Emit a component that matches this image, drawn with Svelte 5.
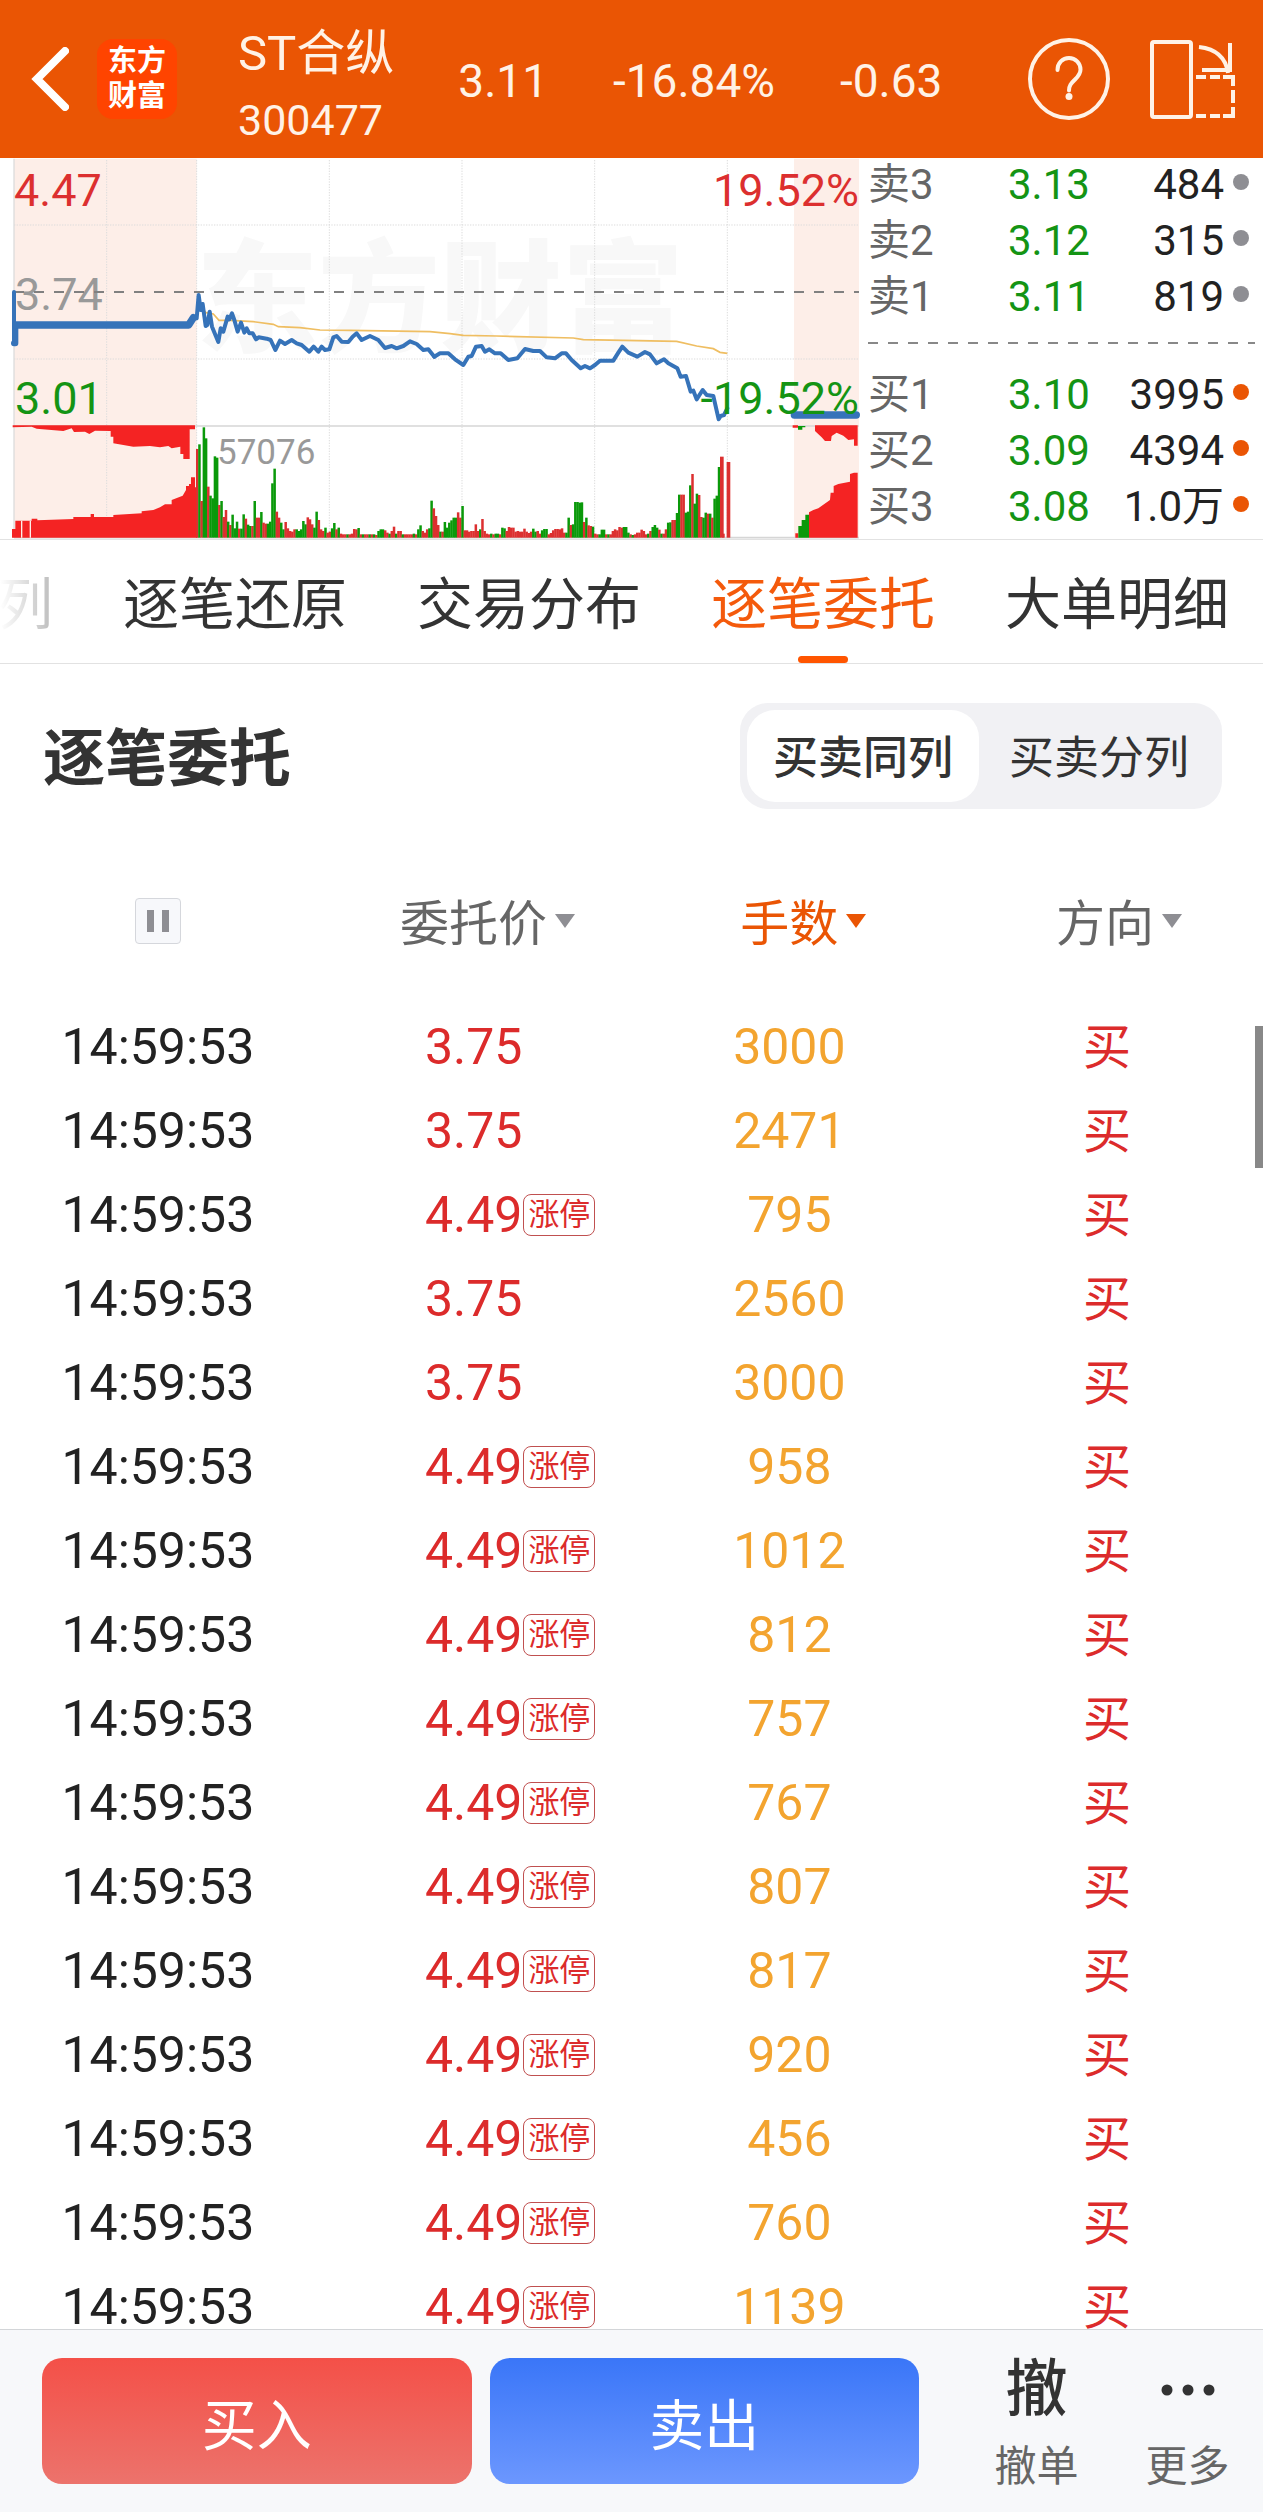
<script>
  const stock = { name: 'ST合纵', code: '300477', price: '3.11', percent: '-16.84%', change: '-0.63' };

  const sells = [
    { label: '卖3', price: '3.13', volume: '484' },
    { label: '卖2', price: '3.12', volume: '315' },
    { label: '卖1', price: '3.11', volume: '819' },
  ];
  const buys = [
    { label: '买1', price: '3.10', volume: '3995' },
    { label: '买2', price: '3.09', volume: '4394' },
    { label: '买3', price: '3.08', volume: '1.0万' },
  ];

  const tabs = ['列', '逐笔还原', '交易分布', '逐笔委托', '大单明细'];
  let activeTab = '逐笔委托';

  const modes = ['买卖同列', '买卖分列'];
  let activeMode = '买卖同列';

  const columns = ['委托价', '手数', '方向'];
  let sortBy = '手数';
  let paused = false;

  const LIMIT_UP = '4.49';
  const orders = [
    ['3.75', 3000],
    ['3.75', 2471],
    ['4.49', 795],
    ['3.75', 2560],
    ['3.75', 3000],
    ['4.49', 958],
    ['4.49', 1012],
    ['4.49', 812],
    ['4.49', 757],
    ['4.49', 767],
    ['4.49', 807],
    ['4.49', 817],
    ['4.49', 920],
    ['4.49', 456],
    ['4.49', 760],
    ['4.49', 1139],
  ].map(([price, hands]) => ({ time: '14:59:53', price, hands, side: '买' }));

  // one entry per minute: r = up, g = down, number = bar height
  const volumes = `
    r266 g280 r110 g331 g298 r153 g126 g118 g244 g240 r98 g110 r62 r83 g48 r38 g69 g28 g48 r27
    g27 g70 r57 g39 g35 r35 g110 r60 r60 g77 r45 r42 g42 g48 g163 g207 r78 r60 g45 g25
    r47 r28 r20 r18 r25 g25 g20 g25 g50 g40 r61 r55 r40 g30 g78 r53 r25 r20 g30 r15
    r18 g28 g44 r25 g30 r12 r10 r10 g10 r10 r12 r26 r25 g29 r10 g10 r10 r10 g10 r10
    g10 r8 g20 g25 g25 r22 r15 g12 r20 r33 g12 r20 r20 g10 r10 r10 r10 r10 g12 r10
    g25 g37 r20 r15 r25 g28 g111 r88 r65 r38 g18 r18 g47 g30 g45 g52 g60 g60 r76 r60
    g95 r22 r22 r18 r20 r20 r40 r20 g25 r56 r20 r12 r10 g12 r10 g12 g12 r10 g30 g28
    r20 r32 r30 r30 r18 r20 r18 r18 r27 r18 r14 r18 g27 g18 r20 r12 g22 g26 g26 r10
    r14 r22 r26 r26 r25 r28 r15 g15 g60 r38 g40 g107 g107 g105 g106 r47 g60 r37 r35 g33
    r12 r10 g10 g24 g24 r10 g10 r10 r20 r25 r22 r32 r30 g32 g32 g15 r10 g8 r10 r15
    r15 r24 r20 r10 g12 r20 g32 g38 g30 r24 g12 r12 r25 g45 g46 r53 r53 g74 g129 r129
    r129 g75 g78 g157 r191 g102 g132 r128 r62 g60 g75 r72 g72 r60 g117 g126 g212 r243 r12 r0 r227`
    .trim()
    .split(/\s+/)
    .map((bar, i) => ({ up: bar[0] === 'r', height: Number(bar.slice(1)), x: 588 + i * 6.633 }));
</script>

<div class="page" lang="zh-CN">
  <header>
    <button class="icon-btn" aria-label="返回">
      <svg width="38" height="64" viewBox="0 0 38 64"><path d="M34 4 6 32l28 28" fill="none" stroke="#fff" stroke-width="8" stroke-linecap="round" /></svg>
    </button>
    <div class="logo"><span>东方</span><span>财富</span></div>
    <div class="stock">
      <h1>{stock.name}</h1>
      <p>{stock.code}</p>
    </div>
    <div class="quote">
      <span>{stock.price}</span>
      <span>{stock.percent}</span>
      <span>{stock.change}</span>
    </div>
    <div class="tools">
      <button class="icon-btn" aria-label="帮助">
        <svg width="82" height="82" viewBox="0 0 82 82" fill="none" stroke="#fff2e6" stroke-width="4">
          <circle cx="41" cy="41" r="39" />
          <path d="M29.500 32c0-7 5-12 11.500-12s11.500 5 11.500 11.500c0 5-3 7.500-6 10.500-3.500 3.500-5.500 5.500-5.500 10.500" stroke-linecap="round" />
          <circle cx="41" cy="58.500" r="3.500" fill="#fff2e6" stroke="none" />
        </svg>
      </button>
      <button class="icon-btn" aria-label="横屏">
        <svg width="86" height="80" viewBox="0 0 86 80" fill="none" stroke="#fff2e6" stroke-width="4">
          <rect x="3" y="3" width="39" height="75" rx="2" />
          <path d="M50 8c18 2 27 12 29 26M81 4v27H53" />
          <path d="M47 38h10M61 38h10M74 38h10v9M84 51v13M84 68v9h-10M71 77H61M57 77H47" />
        </svg>
      </button>
    </div>
  </header>

  <section class="market">
    <svg class="chart" viewBox="0 0 860 381" role="img" aria-label="分时图">
      <text class="watermark" x="196" y="184">东方财富</text>
      <g transform="translate(0 -8) scale(0.33333)">
        <path d="M42 26H590V1163H42zM2382 26H2577V1163H2382z" fill="#fdeee8" />
        <path d="M42 225H2577M42 627H2577M320 30V1163M590 30V1163M988 30V1163M1386 30V1163M1784 30V1163M2182 30V1163" class="grid" />
        <path d="M42 26V1163" stroke="#ddd" stroke-width="4" />
        <path d="M42 828H2577M42 1163H2577" stroke="#d6d6d6" stroke-width="5" />
      </g>
      <text class="label mid" x="15" y="152">3.74</text>
      <text class="label down" x="15" y="256">3.01</text>
      <g transform="translate(0 -8) scale(0.33333)">
        <path d="M42 426H2577" stroke="#808080" stroke-width="6" stroke-dasharray="30 30" />

        <path
          fill="#f42323"
          d="M36 1163V1137H46V1112H95V1106H112V1111L220 1107V1101H272V1092H282V1101H340V1095L425 1090V1084L460 1080 480 1072 495 1063H515V1050L548 1037 558 1020V1008H567V1002H573V982H585V1012H592V1163z
             M38 826H585V838H569V927H550V912H541V890L515 895 505 888 480 892 450 888 400 890 370 885 340 880V860H332V843L285 842 268 852 255 845 222 846 215 835 190 843 110 836 95 830 38 832z"
        />
        <path d="M65 1112V1163M91 1112V1163" stroke="#fdeee8" stroke-width="4" />
        {#each volumes as bar}
          <rect x={bar.x} y={1163 - bar.height} width={bar.height > 220 && bar.x > 2150 ? 11 : 7.5} height={bar.height} fill={bar.up ? '#dc3030' : '#0a990a'} />
        {/each}

        <g transform="translate(1290 0)">
          <path
            fill="#f42323"
            d="M1155 826H1283V887H1272V868L1255 870 1240 857 1220 848 1205 858 1203 873H1185L1175 862 1155 843zM1088 826H1104V833H1088z
               M1137 1163V1087L1150 1080 1165 1075 1200 1050 1202 1028H1211V1008L1225 1002 1260 995V972L1272 968H1283V1163zM1096 1163V1150H1105V1163z"
          />
          <path fill="#0a990a" d="M1104 828H1126V832H1117V839H1104zM1105 1163V1128H1115V1110H1126V1094H1137V1163z" />
        </g>

        <polyline
          class="average"
          points="600,470 618,488 640,492 657,511 690,511 760,515 820,523 835,530 900,533 960,540 1050,541 1290,545 1350,551 1390,556 1490,558 1720,564 1750,569 2030,574 2090,588 2140,596 2160,607 2182,610"
        />
        <path d="M42 426V580" class="price" stroke-width="12" />
        <path d="M42 580H46V525" class="price" stroke-width="18" />
        <path d="M48 525H566L580 503" class="price" stroke-width="22" />
        <polyline
          class="price"
          stroke-width="12"
          points="580,503 590,505 596,435 602,480 608,462 617,528 622,525 629,485 636,530 655,576 662,535 670,545 683,500 688,508 696,490 703,510 713,545 723,518 733,548 740,535 748,550 758,550 768,568 776,562 800,566 812,570 826,600 840,572 855,582 875,570 890,580 905,585 928,605 941,590 955,605 965,590 975,600 988,598 1000,562 1010,558 1025,575 1045,576 1058,560 1070,550 1085,570 1110,558 1135,570 1155,594 1175,588 1190,595 1210,588 1230,574 1250,582 1270,600 1285,598 1303,620"
        />
        <g transform="translate(1290 0)">
          <polyline
            class="price"
            stroke-width="12"
            points="13,620 30,610 55,610 75,628 100,645 115,620 125,618 138,590 155,588 165,605 178,598 195,610 212,610 235,630 262,625 285,597 310,603 330,603 350,622 375,625 395,610 408,610 425,630 452,655 465,648 480,655 495,645 510,632 550,632 565,608 577,590 595,608 622,620 645,606 660,613 680,640 702,628 715,640 742,655 752,680 768,678 782,725 790,722 800,748 818,720 830,735 850,738 866,808 872,798 882,795 892,775"
          />
          <path d="M1093 795H1279" class="price" stroke-width="22" />
        </g>
      </g>
      <text class="label up" x="14" y="48">4.47</text>
      <text class="label up" x="859" y="48" text-anchor="end">19.52%</text>
      <text class="label down" x="859" y="256" text-anchor="end">-19.52%</text>
      <text class="volume" x="217" y="306">57076</text>
    </svg>

    <div class="book">
      <table aria-label="卖盘">
        <tbody>
          {#each sells as row}
            <tr>
              <th scope="row">{row.label}</th>
              <td class="at">{row.price}</td>
              <td class="lots">{row.volume}<i></i></td>
            </tr>
          {/each}
        </tbody>
      </table>
      <div class="spread"></div>
      <table class="bids" aria-label="买盘">
        <tbody>
          {#each buys as row}
            <tr>
              <th scope="row">{row.label}</th>
              <td class="at">{row.price}</td>
              <td class="lots">{row.volume}<i></i></td>
            </tr>
          {/each}
        </tbody>
      </table>
    </div>
  </section>

  <nav class="tabs">
    {#each tabs as tab}
      <button class:active={tab === activeTab} on:click={() => (activeTab = tab)}>{tab}</button>
    {/each}
  </nav>

  <div class="title-bar">
    <h2>逐笔委托</h2>
    <div class="switch">
      {#each modes as mode}
        <button class:active={mode === activeMode} on:click={() => (activeMode = mode)}>{mode}</button>
      {/each}
    </div>
  </div>

  <main>
    <table class="orders">
      <thead>
        <tr>
          <th scope="col">
            <button class="pause" aria-label="暂停" aria-pressed={paused} on:click={() => (paused = !paused)}>
              <svg width="22" height="22" viewBox="0 0 22 22" fill="#8e8e93"><path d="M0 0h7v22H0zM15 0h7v22h-7z" /></svg>
            </button>
          </th>
          {#each columns as column}
            <th scope="col">
              <button class="sort" class:active={column === sortBy} on:click={() => (sortBy = column)}>{column}</button>
            </th>
          {/each}
        </tr>
      </thead>
      <tbody>
        {#each orders as order}
          <tr>
            <td>{order.time}</td>
            <td class="red">
              <span class="bid">{order.price}{#if order.price === LIMIT_UP}<em>涨停</em>{/if}</span>
            </td>
            <td class="hands">{order.hands}</td>
            <td class="red side">{order.side}</td>
          </tr>
        {/each}
      </tbody>
    </table>
    <div class="thumb"></div>
  </main>

  <footer>
    <button class="trade buy">买入</button>
    <button class="trade sell">卖出</button>
    <button class="action"><b>撤</b><span>撤单</span></button>
    <button class="action">
      <svg width="56" height="64" viewBox="0 0 56 64" fill="#333"><circle cx="7" cy="32" r="5.500" /><circle cx="28" cy="32" r="5.500" /><circle cx="49" cy="32" r="5.500" /></svg>
      <span>更多</span>
    </button>
  </footer>
</div>

<style>
  .page {
    display: flex;
    flex-direction: column;
    height: 100vh;
    overflow: hidden;
    background: #fff;
    color: #222;
    font-family: Roboto, 'Noto Sans CJK SC', sans-serif;
  }

  button {
    padding: 0;
    border: 0;
    background: none;
    color: inherit;
    font: inherit;
    cursor: pointer;
  }
  h1,
  h2,
  p {
    margin: 0;
    font-weight: 400;
  }
  svg {
    display: block;
  }

  header {
    display: flex;
    align-items: center;
    flex: none;
    height: 158px;
    padding: 0 28px 0 31px;
    box-sizing: border-box;
    background: #ea5504;
    color: #fff2e6;
  }
  .logo {
    display: flex;
    flex-direction: column;
    align-items: center;
    justify-content: center;
    width: 80px;
    height: 80px;
    margin: 0 61px 0 28px;
    border-radius: 16px;
    background: #ff4400;
    color: #fff;
    font-size: 29px;
    font-weight: 700;
    line-height: 35px;
  }
  .stock {
    padding-top: 12px;
  }
  .stock h1 {
    font-size: 49px;
    line-height: 58px;
  }
  .stock p {
    margin-top: 12px;
    font-size: 43px;
    line-height: 50px;
  }
  .quote {
    display: flex;
    gap: 65px;
    padding: 4px 0 0 64px;
    font-size: 46px;
  }
  .tools {
    display: flex;
    align-items: center;
    gap: 39px;
    margin-left: auto;
  }

  .market {
    display: grid;
    grid-template-columns: 860fr 403fr;
    flex: none;
    border-bottom: 1px solid #e2e2e2;
  }
  .chart {
    width: 100%;
  }
  .watermark {
    font-size: 122px;
    font-weight: 900;
    fill: #f8f8f8;
  }
  .grid {
    fill: none;
    stroke: #dcdcdc;
    stroke-width: 3;
    stroke-dasharray: 4 4;
  }
  .average {
    fill: none;
    stroke: #efbe62;
    stroke-width: 5;
  }
  .price {
    fill: none;
    stroke: #3673b9;
    stroke-linejoin: round;
    stroke-linecap: round;
  }
  .label {
    font-size: 45px;
  }
  .volume {
    font-size: 35px;
    fill: #999;
  }
  .up {
    fill: #dc2f2f;
  }
  .mid {
    fill: #999;
  }
  .down {
    fill: #149414;
  }

  .book {
    padding: 0 14px 0 8px;
    font-size: 42px;
    line-height: 54px;
  }
  .book table {
    width: 100%;
    border-collapse: collapse;
    table-layout: fixed;
  }
  .book tr {
    height: 56px;
  }
  .book th,
  .book td {
    padding: 0;
    vertical-align: top;
    white-space: nowrap;
  }
  .book th {
    width: 31%;
    color: #666;
    font-weight: 400;
    text-align: left;
  }
  .book .at {
    width: 33%;
    color: #149414;
    text-align: center;
  }
  .book .lots {
    text-align: right;
  }
  .book i {
    display: inline-block;
    width: 16px;
    height: 16px;
    margin-left: 9px;
    border-radius: 50%;
    background: #8e8e93;
    vertical-align: 9px;
  }
  .bids i {
    background: #ea5504;
  }
  .spread {
    height: 2px;
    margin: 16px -6px 24px 0;
    background: repeating-linear-gradient(90deg, #888 0 10px, transparent 10px 20px);
  }

  .tabs {
    position: relative;
    display: flex;
    justify-content: flex-end;
    gap: 70px;
    flex: none;
    padding-right: 34px;
    border-bottom: 1px solid #e2e2e2;
    color: #333;
    font-size: 56px;
    line-height: 115px;
    overflow: hidden;
  }
  .tabs button {
    position: relative;
    flex: none;
    padding-top: 8px;
  }
  .tabs .active {
    color: #f45a0c;
  }
  .tabs .active::after {
    content: '';
    position: absolute;
    bottom: 0;
    left: 50%;
    width: 50px;
    height: 7px;
    margin-left: -25px;
    border-radius: 4px;
    background: #ff5500;
  }
  .tabs::before {
    content: '';
    position: absolute;
    z-index: 1;
    top: 0;
    left: 0;
    width: 80px;
    height: 100%;
    background: linear-gradient(90deg, #fff, rgba(255, 255, 255, 0.5));
  }

  .title-bar {
    display: flex;
    align-items: center;
    justify-content: space-between;
    flex: none;
    padding: 39px 41px 0 43px;
    color: #333;
  }
  .title-bar h2 {
    padding-top: 8px;
    font-size: 62px;
    font-weight: 700;
    line-height: 98px;
  }
  .switch {
    display: flex;
    gap: 4px;
    padding: 7px;
    border-radius: 28px;
    background: #f1f1f4;
    font-size: 45px;
    line-height: 86px;
  }
  .switch button {
    padding: 6px 26px 0;
    border-radius: 28px;
  }
  .switch .active {
    background: #fff;
    font-weight: 500;
  }

  main {
    position: relative;
    flex: 1;
    min-height: 0;
    overflow: hidden;
  }
  .orders {
    width: 100%;
    margin-top: 32px;
    border-collapse: collapse;
    table-layout: fixed;
    font-size: 50px;
    line-height: 84px;
    text-align: center;
  }
  .orders th {
    height: 164px;
    padding: 0;
    font-size: 49px;
    font-weight: 400;
  }
  .orders td {
    height: 84px;
    padding: 0;
  }
  .pause {
    display: inline-flex;
    align-items: center;
    justify-content: center;
    width: 46px;
    height: 46px;
    margin-bottom: 10px;
    border: 1px solid #d5d7dc;
    border-radius: 4px;
    background: #f7f8fb;
    vertical-align: middle;
  }
  .sort {
    position: relative;
    padding-top: 4px;
    color: #666;
  }
  .sort::after {
    content: '';
    position: absolute;
    top: 50%;
    left: 100%;
    margin: -9px 0 0 8px;
    border: solid transparent;
    border-width: 14px 10px 0;
    border-top-color: #8e8e93;
  }
  .sort.active {
    color: #ea5504;
  }
  .sort.active::after {
    border-top-color: #ea5504;
  }
  .red {
    color: #dc2b2b;
  }
  .hands {
    color: #f3a42f;
  }
  .orders .side {
    padding: 2px 0 0 4px;
    height: 82px;
    font-size: 48px;
    line-height: 82px;
  }
  .bid {
    position: relative;
  }
  .bid em {
    position: absolute;
    top: 50%;
    left: 100%;
    padding: 0 4px;
    margin: -21px 0 0 1px;
    border: 1px solid #c05050;
    border-radius: 8px;
    font-size: 31px;
    font-style: normal;
    line-height: 40px;
    white-space: nowrap;
  }
  .thumb {
    position: absolute;
    top: 217px;
    right: 0;
    width: 8px;
    height: 142px;
    background: #888;
  }

  footer {
    display: flex;
    align-items: flex-start;
    flex: none;
    padding: 28px 0 20px 42px;
    border-top: 1px solid #d3d5d8;
    background: #f7f8fa;
  }
  .trade {
    flex: 1;
    height: 126px;
    margin-right: 18px;
    border-radius: 20px;
    color: #fff;
    font-size: 55px;
  }
  .buy {
    background: linear-gradient(#f45048, #ec736c);
  }
  .sell {
    margin-right: 42px;
    background: linear-gradient(#3a76f8, #6c97fe);
  }
  .action {
    display: flex;
    flex-direction: column;
    align-items: center;
    width: 151px;
    color: #666;
    font-size: 42px;
    line-height: 50px;
  }
  .action b {
    color: #333;
    font-size: 62px;
    font-weight: 500;
    line-height: 64px;
  }
  .action span {
    margin-top: 20px;
  }
</style>
